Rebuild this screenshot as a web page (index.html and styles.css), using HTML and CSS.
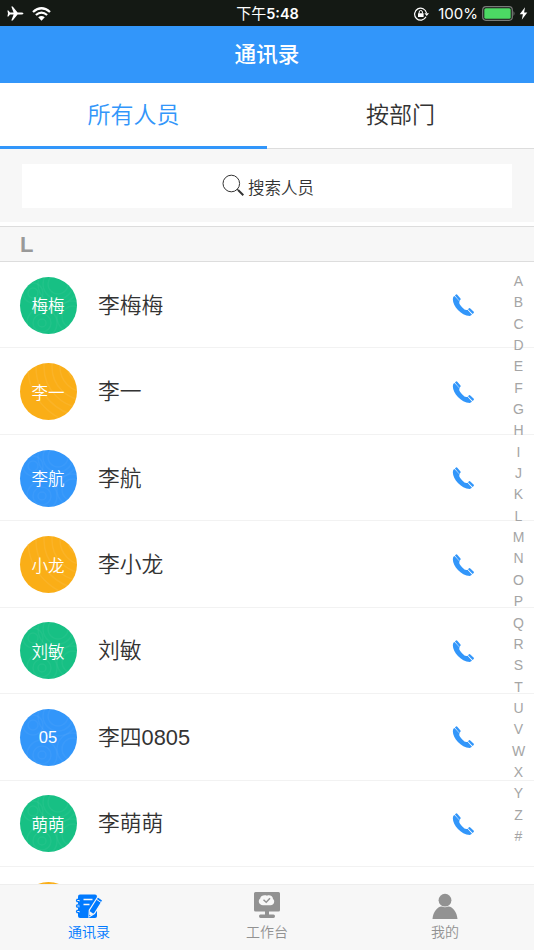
FILE: index.html
```html
<!DOCTYPE html>
<html lang="zh-CN">
	<head>
		<meta charset="utf-8">
		<title>通讯录</title>
		<link rel="stylesheet" href="styles.css">
	</head>
	<body>
		<svg class="defs">
			<symbol id="phone" viewBox="0 0 24 24">
				<path d="M2.400 3.800C-.5 10 8.500 22.500 18.800 22.900L21 21.700 16.500 16.700C14.800 17.600 13.500 16.700 11.300 14.500C8.800 12 7.600 10.400 8.600 8.600L3.500 3Z"/>
				<path d="M3.900 2.600L5 1.600Q5.700 1.100 6.300 1.700L9.500 5.500Q10 6.200 9.400 6.800L8.500 7.900ZM17 16.200L18 15.300Q18.600 14.900 19.300 15.400L22.800 18.800Q23.200 19.400 22.700 20L21.600 21.100Z"/>
			</symbol>
			<symbol id="wave1" viewBox="0 0 57 57">
				<g fill="none" stroke="#fff" stroke-opacity=".045" stroke-width="1.500">
					<circle cx="13" cy="16" r="5"/><circle cx="13" cy="16" r="10"/><circle cx="38" cy="7" r="10"/><circle cx="38" cy="7" r="15"/><circle cx="38" cy="7" r="20"/>
					<circle cx="22" cy="46" r="4"/><circle cx="22" cy="46" r="9"/><circle cx="22" cy="46" r="15"/><circle cx="53" cy="40" r="11"/><circle cx="53" cy="40" r="16"/>
				</g>
			</symbol>
			<symbol id="wave2" viewBox="0 0 57 57">
				<g fill="none" stroke="#fff" stroke-opacity=".07" stroke-width="1.500">
					<circle cx="65" cy="4" r="17"/><circle cx="65" cy="4" r="25"/><circle cx="65" cy="4" r="33"/><circle cx="65" cy="4" r="41"/><circle cx="65" cy="4" r="49"/><circle cx="65" cy="4" r="57"/>
				</g>
			</symbol>
		</svg>
		<div class="app">
			<div class="status">
				<div class="status-left">
					<svg class="plane" viewBox="0 0 17 15"><path d="M16.500 7.500Q16.300 6.500 14.500 6.500H10.600L5.700.4H4.300L6.600 6.500H3L1.400 4.500H.4L1 7.500.4 10.500H1.400L3 8.500H6.600L4.300 14.600H5.700L10.600 8.500H14.500Q16.300 8.500 16.500 7.500Z"/></svg>
					<svg class="wifi" viewBox="0 0 19 14"><path d="M1 5Q9.500-2.600 18 5M3.900 8Q9.500 3.200 15.100 8" fill="none" stroke="#fff" stroke-width="2.300"/><path d="M6.200 10.300Q9.500 7.600 12.800 10.300L9.500 13.700Z"/></svg>
				</div>
				<div class="time"><span>下午</span>5:48</div>
				<div class="status-right">
					<svg class="lock" viewBox="0 0 16 14"><path d="M12 9.800A6 6 0 1 1 12.500 6" fill="none" stroke="#fff" stroke-width="1.200"/><path d="M10.400 6.200H15L12.700 9ZM4 6.200H9.600V10H4Z"/><path d="M5.200 6.500V5Q5.200 3.500 6.800 3.500T8.400 5V6.500" fill="none" stroke="#fff"/></svg>
					<span>100%</span>
					<svg class="battery" viewBox="0 0 34 16"><rect x=".7" y=".7" width="29.600" height="13.600" rx="3.200" fill="none" stroke="#777b78" stroke-width="1.200"/><rect x="2.300" y="2.300" width="26.400" height="10.400" rx="1.500" fill="#4cd964"/><path d="M31.500 5Q33.500 7.500 31.500 10Z" fill="#777b78"/></svg>
					<svg class="bolt" viewBox="0 0 9 13"><path d="M6 .3L.7 7.200H3.900L2.800 12.700 8.300 5.500H5.100Z"/></svg>
				</div>
			</div>
			<div class="header">通讯录</div>
			<ul class="tabs">
				<li class="ac">所有人员</li>
				<li>按部门</li>
			</ul>
			<div class="search">
				<div class="search-box">
					<svg viewBox="0 0 23 23"><circle cx="9.300" cy="9.500" r="8.300" fill="none" stroke="#333" stroke-width="1"/><path d="M15 15.200L17 16.800" stroke="#333" stroke-width="1.200"/><path d="M16.300 16.300L21.300 21.200" stroke="#333" stroke-width="2"/></svg>
					<span>搜索人员</span>
				</div>
			</div>
			<div class="group">L</div>
			<div class="content">
				<ul class="list">
					<li><div class="avatar green"><svg><use href="#wave1"/></svg><span>梅梅</span></div><span class="name">李梅梅</span><svg class="call"><use href="#phone"/></svg></li>
					<li><div class="avatar orange"><svg><use href="#wave2"/></svg><span>李一</span></div><span class="name">李一</span><svg class="call"><use href="#phone"/></svg></li>
					<li><div class="avatar blue"><svg><use href="#wave1"/></svg><span>李航</span></div><span class="name">李航</span><svg class="call"><use href="#phone"/></svg></li>
					<li><div class="avatar orange"><svg><use href="#wave2"/></svg><span>小龙</span></div><span class="name">李小龙</span><svg class="call"><use href="#phone"/></svg></li>
					<li><div class="avatar green"><svg><use href="#wave1"/></svg><span>刘敏</span></div><span class="name">刘敏</span><svg class="call"><use href="#phone"/></svg></li>
					<li><div class="avatar blue"><svg><use href="#wave1"/></svg><span>05</span></div><span class="name">李四0805</span><svg class="call"><use href="#phone"/></svg></li>
					<li><div class="avatar green"><svg><use href="#wave1"/></svg><span>萌萌</span></div><span class="name">李萌萌</span><svg class="call"><use href="#phone"/></svg></li>
					<li><div class="avatar orange"><svg><use href="#wave2"/></svg></div></li>
				</ul>
				<ol class="letters">
					<li>A</li><li>B</li><li>C</li><li>D</li><li>E</li><li>F</li><li>G</li><li>H</li><li>I</li>
					<li>J</li><li>K</li><li>L</li><li>M</li><li>N</li><li>O</li><li>P</li><li>Q</li><li>R</li>
					<li>S</li><li>T</li><li>U</li><li>V</li><li>W</li><li>X</li><li>Y</li><li>Z</li><li>#</li>
				</ol>
			</div>
			<ul class="footer">
				<li class="ac">
					<svg viewBox="0 0 28 28">
						<path d="M5 2.500H20Q22 2.500 22 4.500V24Q22 26 20 26H5Q3 26 3 24V4.500Q3 2.500 5 2.500Z"/>
						<path d="M2 8.500H4.500M2 14H4.500M2 19.500H4.500" stroke="#f7f7f7" stroke-width="3"/>
						<path d="M5 7.300H2Q1 8.500 2 9.700H4.500M5 12.800H2Q1 14 2 15.200H4.500M5 18.300H2Q1 19.500 2 20.700H4.500" fill="none" stroke="#007aff" stroke-width="1.300"/>
						<path d="M8.500 7.500H17.500M8.500 12.500H14.500" stroke="#f7f7f7" stroke-width="1.500"/>
						<path d="M22.800 4.800L27.800 8.200 19.500 21.500 14 24.800 14.300 18.200Z" stroke="#f7f7f7" stroke-width="1.200"/>
						<path d="M21.300 7.200L26.300 10.600" stroke="#f7f7f7"/>
						<path d="M14.800 19.300L18.300 21.700 14.500 24Z" fill="#f7f7f7"/>
						<path d="M14.200 22.700L15.600 23.600 14.200 24.400Z"/>
					</svg>
					<span>通讯录</span>
				</li>
				<li>
					<svg viewBox="0 0 28 28">
						<path d="M2.500 0H25.500Q27 0 27 1.500V18Q27 19.500 25.500 19.500H16V22.500H20.500Q22 22.500 22 24.200T20.500 26H7.500Q6 26 6 24.200T7.500 22.500H12V19.500H2.500Q1 19.500 1 18V1.500Q1 0 2.500 0Z"/>
						<path d="M10 13.200C5.500 13.200 4.700 8 7.200 6.500C7.500 3.600 11.500 2.500 14 3.700C17 2.500 20 4.500 20 7C22.300 8.500 21.300 13.200 17.500 13.200Z" fill="#f7f7f7"/>
						<path d="M10.500 7.800L13.200 10.300 17 6.300" fill="none" stroke="#929292" stroke-width="1.500"/>
					</svg>
					<span>工作台</span>
				</li>
				<li>
					<svg viewBox="0 0 28 28"><circle cx="14" cy="8.200" r="6.400"/><path d="M1.500 27C2 20 6.500 15 10.400 14.600Q14 16 17.600 14.600C21.500 15 26 20 26.500 27Z"/></svg>
					<span>我的</span>
				</li>
			</ul>
		</div>
	</body>
</html>
```
FILE: styles.css
```css
* {margin:0; padding:0; box-sizing:border-box; }
li{list-style:none; }
body{
	font-family: "Liberation Sans", "Noto Sans CJK SC", sans-serif;
	font-weight: 350;
	color: #333;
	background: #fff;
}
.defs{display: none; }
.app{
	height: 950px;
	display: flex;
	flex-direction: column;
	overflow: hidden;
}
/* status bar */
.status{
	height: 26px;
	flex: none;
	display: grid;
	grid-template-columns: 1fr auto 1fr;
	align-items: center;
	padding: 1px 6px 0 7px;
	background: #141914;
	color: #fff;
	font: 400 15px/24px Inter, "Noto Sans CJK SC", sans-serif;
}
.status svg{fill: #fff; }
.status-left,.status-right{
	display: flex;
	align-items: center;
}
.status-right{justify-content: flex-end; }
.plane{width: 17px; height: 15px; }
.wifi{width: 19px; height: 14px; margin-left: 8px; }
.time{font-weight: 600; font-size: 14.500px; }
.time span{font-weight: 400; font-size: 15px; }
.lock{width: 16px; height: 14px; margin-right: 8px; }
.battery{width: 34px; height: 16px; margin-left: 4px; }
.bolt{width: 9px; height: 13px; margin-left: 3px; }
.header{
	height: 57px;
	flex: none;
	line-height: 58px;
	text-align: center;
	font-size: 21.600px;
	font-weight: 500;
	color: #fff;
	background: #3296fa;
}
.tabs{
	height: 66px;
	flex: none;
	display: flex;
	border-bottom: 1px solid #ddd;
}
.tabs li{
	flex: 1;
	line-height: 64px;
	text-align: center;
	font-size: 23px;
}
.tabs li.ac{
	margin-bottom: -1px;
	color: #3296fa;
	border-bottom: 3px solid #3296fa;
}
.search{
	height: 73px;
	flex: none;
	padding: 15px 22px 14px;
	background: #f7f7f7;
}
.search-box{
	height: 44px;
	display: flex;
	align-items: center;
	justify-content: center;
	padding-left: 2px;
	background: #fff;
	font-size: 16.500px;
}
.search-box svg{
	width: 23px;
	height: 23px;
	margin-right: 3px;
	margin-bottom: 1px;
}
.search-box span{padding-top: 1px; }
.group{
	height: 36px;
	flex: none;
	margin-top: 4px;
	padding-left: 20px;
	line-height: 35px;
	font-size: 22px;
	font-weight: 700;
	color: #999;
	background: #f7f7f7;
	border-top: 1px solid #ddd;
	border-bottom: 1px solid #ddd;
}
/* contacts */
.content{
	flex: 1;
	min-height: 0;
	position: relative;
	overflow: hidden;
}
.list li{
	height: 86.450px;
	display: flex;
	align-items: center;
	padding: 1px 59px 0 19.500px;
	border-bottom: 1px solid #f2f2f2;
}
.avatar{
	width: 57px;
	height: 57px;
	display: grid;
	place-items: center;
	border-radius: 50%;
	overflow: hidden;
	color: #fff;
	font-size: 16.500px;
}
.avatar svg,.avatar span{grid-area: 1 / 1; }
.avatar svg{width: 57px; height: 57px; }
.green{background: #17c084; }
.orange{background: #faae17; }
.blue{background: #3296fa; }
.name{
	flex: 1;
	margin-left: 21.500px;
	padding-bottom: 4px;
	font-size: 21.800px;
}
.call{
	width: 24px;
	height: 24px;
	fill: #3296fa;
}
.letters{
	position: absolute;
	top: 9px;
	right: 3px;
	width: 25px;
}
.letters li{
	height: 21.350px;
	line-height: 21.350px;
	text-align: center;
	font-size: 14px;
	color: #a5a5a5;
}
/* bottom menu */
.footer{
	height: 66px;
	flex: none;
	display: flex;
	border-top: 1px solid #eee;
	background: #f7f7f7;
}
.footer li{
	flex: 1;
	display: flex;
	flex-direction: column;
	align-items: center;
	padding-top: 7px;
	font-size: 14px;
	line-height: 25px;
	color: #929292;
	fill: #929292;
}
.footer li.ac{color: #007aff; fill: #007aff; }
.footer svg{width: 28px; height: 28px; }
```
